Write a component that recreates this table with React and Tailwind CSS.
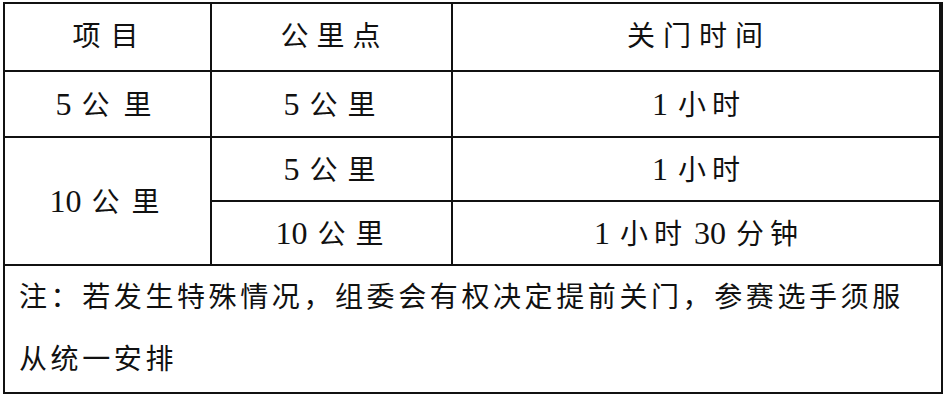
const font = "font-['Liberation_Serif','Noto_Sans_CJK_SC',serif]"

function Text({ text }) {
  return text.split(/(\d+)/).filter(Boolean).map((part, i) =>
    /\d/.test(part)
      ? <span key={i} className={`mr-[10px] text-[32px] tracking-normal ${i > 0 ? 'ml-[6px]' : ''}`}>{part}</span>
      : <span key={i}>{part.trim()}</span>
  )
}

function Cell({ text, className = '', track = 'tracking-[8px]' }) {
  return (
    <div className={`flex items-center justify-center border-r-2 border-b-2 border-[#111] text-[28px] leading-none text-[#111] ${track} ${className}`}>
      <span className="flex items-baseline pl-[6px]"><Text text={text} /></span>
    </div>
  )
}

export default function App() {
  return (
    <div className={`min-h-[402px] w-[948px] bg-white pt-[2px] pl-[3px] ${font}`}>
      <div className="w-[940px] border-2 border-[#111]">
        <div className="grid grid-cols-[207px_241px_488px] grid-rows-[68px_66px_64px_64px]">
          <Cell text="项目" track="tracking-[10px]" />
          <Cell text="公里点" track="tracking-[8px]" />
          <Cell text="关门时间" track="tracking-[8px]" className="border-r-0" />

          <Cell text="5 公里" track="tracking-[14px]" />
          <Cell text="5 公里" track="tracking-[10px]" />
          <Cell text="1 小时" track="tracking-[6px]" className="border-r-0" />

          <Cell text="10 公里" track="tracking-[12px]" className="row-span-2" />
          <Cell text="5 公里" track="tracking-[10px]" />
          <Cell text="1 小时" track="tracking-[6px]" className="border-r-0" />

          <Cell text="10 公里" track="tracking-[10px]" />
          <Cell text="1 小时 30 分钟" track="tracking-[6px]" className="border-r-0" />
        </div>
        <div className="flex h-[126px] items-center pl-[14px] text-[28px] leading-[62px] tracking-[3.6px] text-[#111]">
          <p>
            注：若发生特殊情况，组委会有权决定提前关门，参赛选手须服
            <br />
            从统一安排
          </p>
        </div>
      </div>
    </div>
  )
}
